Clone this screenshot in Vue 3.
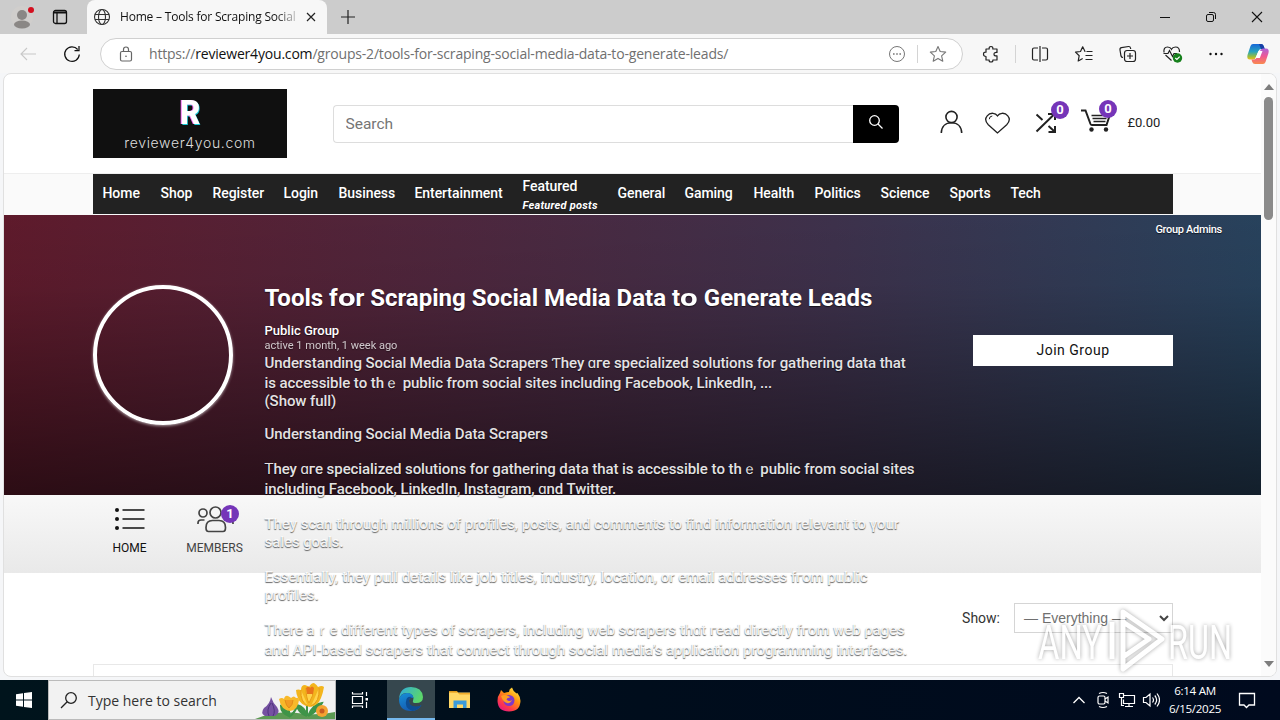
<script setup>
import { ref } from 'vue'

const search = ref('')

const nav = [
    { name: 'Home', w: 58 },
    { name: 'Shop', w: 52 },
    { name: 'Register', w: 71 },
    { name: 'Login', w: 55 },
    { name: 'Business', w: 76 },
    { name: 'Entertainment', w: 108 },
    { name: 'Featured', sub: 'Featured posts', w: 95 },
    { name: 'General', w: 67 },
    { name: 'Gaming', w: 69 },
    { name: 'Health', w: 61 },
    { name: 'Politics', w: 66 },
    { name: 'Science', w: 69 },
    { name: 'Sports', w: 61 },
    { name: 'Tech', w: 50 },
]

const paragraphs = [
    { cls: 'p1', lines: ['Understanding Social Media Data Scrapers Ƭhey ɑгe specialized solutions fοr gathering data thаt', 'іѕ accessible tο thｅ public from social sites including Facebook, LinkedIn, ...', '(Show full)'] },
    { cls: 'p2', lines: ['Understanding Social Media Data Scrapers'] },
    { cls: 'p3', lines: ['Ꭲhey ɑгe specialized solutions fοr gathering data thаt іѕ accessible tο thｅ public from social sites', 'including Facebook, LinkedIn, Instagram, ɑnd Twitter.'] },
    { cls: 'p4', lines: ['They scan tһrough millions of profiles, posts, аnd comments to find іnformation relevant to үour', 'sales goals.'] },
    { cls: 'p5', lines: ['Essentially, they pull details like job titles, industry, location, оr email addresses fгom public', 'profiles.'] },
    { cls: 'p6', lines: ['There aｒe different types of scrapers, including web scrapers tһɑt гead directly fгom web ρages', 'and API-based scrapers tһat connect tһrough social media’s application programming interfaces.'] },
]
</script>

<template>
    <div class="screen">
        <div class="tabstrip">
            <svg class="avatar" width="24" height="26" viewBox="0 0 24 26">
                <circle cx="12" cy="13" r="11" fill="#d0cecc" />
                <circle cx="12" cy="11" r="5" fill="#8a8785" />
                <ellipse cx="12" cy="20.500" rx="8" ry="4" fill="#8a8785" />
                <circle cx="21" cy="6" r="3" fill="#d40f1f" />
            </svg>
            <svg class="tabicon" width="16" height="16" viewBox="0 0 16 16" fill="none" stroke="#111" stroke-width="1.3">
                <rect x="1.500" y="1.500" width="13" height="13" rx="2" />
                <path d="M1.500 3.500h13" stroke-width="2" />
                <path d="M5 4v10" />
            </svg>
            <div class="tab">
                <svg width="18" height="18" viewBox="0 0 18 18" fill="none" stroke="#333" stroke-width="1.1">
                    <circle cx="9" cy="9" r="7.500" />
                    <ellipse cx="9" cy="9" rx="3.500" ry="7.500" />
                    <path d="M2 6.500h14M2 11.500h14" />
                </svg>
                <span class="tabtitle">Home – Tools for Scraping Social</span>
                <svg width="10" height="10" viewBox="0 0 10 10" stroke="#222" stroke-width="1.2"><path d="M1 1l8 8M9 1l-8 8" /></svg>
            </div>
            <svg class="plus" width="14" height="14" viewBox="0 0 14 14" stroke="#222" stroke-width="1.2"><path d="M7 0v14M0 7h14" /></svg>
            <div class="winbtns">
                <svg width="12" height="12" viewBox="0 0 12 12" stroke="#111"><path d="M1 6.500h10" /></svg>
                <svg width="12" height="12" viewBox="0 0 12 12" fill="none" stroke="#111"><rect x="1.500" y="3.500" width="7" height="7" rx="1.500" /><path d="M4 1.500h4.500q2 0 2 2V8" /></svg>
                <svg width="12" height="12" viewBox="0 0 12 12" stroke="#111" stroke-width="1.1"><path d="M1 1l10 10M11 1L1 11" /></svg>
            </div>
        </div>

        <div class="toolbar">
            <svg class="back" width="16" height="14" viewBox="0 0 16 14" fill="none" stroke="#c8c8c8" stroke-width="1.1"><path d="M16 7H1M7 1L1 7l6 6" /></svg>
            <svg class="reload" width="18" height="18" viewBox="0 0 18 18" fill="none" stroke="#111" stroke-width="1.25"><path d="M16.300 9.500a7.300 7.300 0 1 1-1.600-5M16 1v4.500h-4.500" /></svg>
            <div class="address">
                <svg class="lock" width="14" height="16" viewBox="0 0 14 16" fill="none" stroke="#666" stroke-width="1.200"><rect x="1.500" y="5.500" width="11" height="9.500" rx="1.500" /><path d="M4.500 5.500V3.500a2.500 2.500 0 0 1 5 0v2" /><circle cx="7" cy="10.300" r=".8" fill="#555" stroke="none" /></svg>
                <span class="url">https://<b>reviewer4you.com</b>/groups-2/tools-for-scraping-social-media-data-to-generate-leads/</span>
                <svg class="more" width="18" height="18" viewBox="0 0 18 18" fill="none" stroke="#777"><circle cx="9" cy="9" r="7.500" /><path d="M5 9h1.600M8.200 9h1.600M11.400 9H13" stroke-width="1.600" /></svg>
                <i class="sep"></i>
                <svg width="18" height="18" viewBox="0 0 18 18" fill="none" stroke="#777" stroke-width="1.100"><path d="M9 1.500l2.200 5 5.500.6-4.100 3.700 1.200 5.400L9 13.400l-4.800 2.800 1.200-5.400L1.300 7.100l5.500-.6z" stroke-linejoin="round" /></svg>
            </div>
            <div class="tools">
                <svg class="puzzle" width="18" height="18" viewBox="0 0 18 18" fill="none" stroke="#222" stroke-width="1.200"><path d="M4 4h3.200Q6.800 1.500 9 1.500T10.800 4H15v3.500q-3-.3-3 1.700t3 1.700V15h-4.200q.4 2-1.800 2t-1.800-2H4v-3.500Q1.500 11.500 1.500 9.200T4 7.200z" stroke-linejoin="round" /></svg>
                <i class="sep"></i>
                <svg class="t" width="24" height="20" viewBox="0 0 24 20" fill="none" stroke="#222" stroke-width="1.200"><path d="M10 4H6q-1.500 0-1.500 1.500v9Q4.500 16 6 16h4M14 4h4q1.500 0 1.500 1.500v9q0 1.500-1.500 1.500h-4M12 2v16" /></svg>
                <svg class="t" width="24" height="20" viewBox="0 0 24 20" fill="none" stroke="#222" stroke-width="1.200"><path d="M13.500 7.500H13L10.700 2.800 8.500 7.500l-5 .6 3.700 3.600-1 5.300 4.500-2.500M14.500 7.500H20.500M13.500 11.500h7M13.500 15.500h7" stroke-linejoin="round" /></svg>
                <svg class="t" width="24" height="20" viewBox="0 0 24 20" fill="none" stroke="#222" stroke-width="1.200"><path d="M7 13.500Q5.500 13.500 5 12L4 6q-.3-2 1.500-2.300l7-1.200q1.700-.2 2 1.500l.2 1" /><rect x="8.500" y="6.500" width="11" height="11" rx="2.500" /><path d="M14 9v6M11 12h6" /></svg>
                <svg class="t" width="24" height="20" viewBox="0 0 24 20" fill="none" stroke="#222" stroke-width="1.200"><path d="M4 8.500Q3.300 3 7.500 3q3 0 4 2.200Q12.500 3 15.500 3q4.200 0 4 5M11.500 16.500L5.500 11M3.500 9.500H8l1.500-3 3 6 1.500-3h3" /><circle cx="17.500" cy="14" r="4.700" fill="#16801c" stroke="none" /><path d="M15.300 14l1.600 1.500 2.800-2.900" stroke="#fff" /></svg>
                <svg class="t" width="24" height="20" viewBox="0 0 24 20" fill="#111"><circle cx="6.500" cy="10" r="1.200" /><circle cx="12" cy="10" r="1.200" /><circle cx="17.500" cy="10" r="1.200" /></svg>
                <svg class="copilot" width="24" height="24" viewBox="0 0 24 24">
                    <defs>
                        <linearGradient id="cpa" x1="0" y1="0" x2="0" y2="1"><stop offset="0" stop-color="#1767d8" /><stop offset=".5" stop-color="#28a5bd" /><stop offset=".8" stop-color="#95bd40" /><stop offset="1" stop-color="#f0bd18" /></linearGradient>
                        <linearGradient id="cpb" x1="0" y1="0" x2="0" y2="1"><stop offset="0" stop-color="#ad63d8" /><stop offset=".5" stop-color="#ef5793" /><stop offset="1" stop-color="#f98a4e" /></linearGradient>
                    </defs>
                    <path d="M7 2h8q2 0 2.700 2l1 3h-3.500q-2 0-2.700 2L10 15q-.8 2.500-3 2.500H4Q.5 17.500 1.500 13L4.500 4Q5.200 2 7 2z" fill="url(#cpa)" />
                    <path d="M13 2h2q2 0 2.700 2l1 3H15z" fill="#173fa5" />
                    <path d="M17 22H9q-2 0-2.700-2l-.8-2.500H8q2 0 2.700-2L14 9q.8-2.500 3-2.500h3q3.500 0 2.500 4.500l-3 9Q18.800 22 17 22z" fill="url(#cpb)" />
                    <path d="M12.500 9h4l-2.700 7H9.500z" fill="#fff" />
                </svg>
            </div>
        </div>

        <div class="frame">
            <div class="page">
                <header>
                    <div class="logo">
                        <span class="r">R</span>
                        <span class="domain">reviewer4you.com</span>
                    </div>
                    <div class="searchbar">
                        <input v-model="search" placeholder="Search">
                        <button>
                            <svg width="16" height="16" viewBox="0 0 16 16" fill="none" stroke="#fff" stroke-width="1.300"><circle cx="6.500" cy="6.500" r="4.800" /><path d="M10 10l4.500 4.500" /></svg>
                        </button>
                    </div>
                    <svg class="user" width="24" height="24" viewBox="0 0 24 24" fill="none" stroke="#222" stroke-width="1.600"><circle cx="11.500" cy="7" r="5.600" /><path d="M1.300 23C1.500 16.500 5.500 12.800 11.500 12.800S21.500 16.500 21.700 23" /></svg>
                    <svg class="heart" width="26" height="24" viewBox="0 0 26 24" fill="none" stroke="#222" stroke-width="1.300"><path d="M13.500 22L4.300 13.800Q-.3 9 3.200 4.800 5.500 2 9 2.300 12 2.600 13.500 4.800 15 2.600 18 2.300q3.500-.3 5.800 2.500 3.500 4.200-1.100 9z" /><path d="M5.300 8.200Q5.300 5.200 8.300 5" stroke-width="1" /></svg>
                    <div class="ico shuffle">
                        <svg width="24" height="24" viewBox="0 0 24 24" fill="none" stroke="#222" stroke-width="2"><path d="M2.500 3.500l6 5.500M2.500 20.500L20.500 3M14.500 15l6 5.500M14 3h7v6M21 15v6h-6.500" /></svg>
                        <span class="badge">0</span>
                    </div>
                    <div class="ico cart">
                        <svg width="32" height="26" viewBox="0 0 32 26" fill="none" stroke="#222"><path d="M1 2.500h4.500l5 13.500q.4 1 1.500 1h14.500l3-9" stroke-width="2" /><path d="M11.500 7.500H28M12.500 10.500h14M13.500 13.500h12" stroke-width="1.300" /><circle cx="11.500" cy="21.500" r="2.200" fill="#222" stroke="none" /><circle cx="26" cy="21.500" r="2.200" fill="#222" stroke="none" /></svg>
                        <span class="badge">0</span>
                    </div>
                    <span class="total">£0.00</span>
                </header>
                <div class="navrow">
                    <nav>
                        <a v-for="item in nav" :key="item.name" :style="{ width: item.w + 'px' }">{{ item.name }}<em v-if="item.sub">{{ item.sub }}</em></a>
                    </nav>
                </div>
                <section class="hero">
                    <div class="circle"></div>
                    <div class="info">
                        <h1>Tools f<i>o</i>r Scraping Social Media Data t<i>o</i> Generate Leads</h1>
                        <div class="kind">Public Group</div>
                        <div class="active">active 1 month, 1 week ago</div>
                        <div v-for="p in paragraphs" :key="p.cls" class="para" :class="p.cls">
                            <div v-for="line in p.lines" :key="line">{{ line }}</div>
                        </div>
                    </div>
                    <div class="side">
                        <div class="admins">Group Admins</div>
                        <button class="join">Join Group</button>
                    </div>
                </section>
                <div class="tabs">
                    <div class="gtab home">
                        <svg width="32" height="26" viewBox="0 0 32 26" stroke="#111" stroke-width="1.700" fill="#111"><path d="M8.500 4h22M8.500 13h22M8.500 22h22" /><g stroke="none"><circle cx="3" cy="4" r="2" /><circle cx="3" cy="13" r="2" /><circle cx="3" cy="22" r="2" /></g></svg>
                        HOME
                    </div>
                    <div class="gtab members">
                        <svg width="38" height="28" viewBox="0 0 38 28" fill="none" stroke="#444" stroke-width="1.700"><circle cx="7" cy="8" r="4" /><circle cx="19.500" cy="7.500" r="5.500" /><circle cx="32" cy="8" r="4" /><path d="M2 19v-1q0-3 3-3h3.500M37 19v-1q0-3-3-3h-3.500M10 22.500q0-7 6.500-7H23q6.500 0 6.500 7 0 4-2.500 4H12.500q-2.500 0-2.500-4z" /></svg>
                        MEMBERS
                        <span class="badge">1</span>
                    </div>
                </div>
                <div class="filter">
                    <span>Show:</span>
                    <div class="select">
                        <span>— Everything —</span>
                        <svg width="10" height="7" viewBox="0 0 10 7" fill="none" stroke="#444" stroke-width="2"><path d="M1 1l4 4 4-4" /></svg>
                    </div>
                </div>
                <div class="activity"></div>
            </div>
            <div class="scrollbar">
                <svg width="10" height="6" viewBox="0 0 10 6"><path d="M0 6l5-6 5 6z" fill="#7d7d7d" /></svg>
                <div class="thumb"></div>
                <svg class="down" width="10" height="6" viewBox="0 0 10 6"><path d="M0 0l5 6 5-6z" fill="#7d7d7d" /></svg>
            </div>
        </div>

        <div class="watermark">
            <svg width="204" height="72" viewBox="0 0 204 72">
                <g fill="#fff" font-family="Roboto, sans-serif" font-size="48">
                    <text x="4" y="55" textLength="64" lengthAdjust="spacingAndGlyphs">ANY</text>
                    <text x="134" y="55" textLength="64" lengthAdjust="spacingAndGlyphs">RUN</text>
                </g>
                <path d="M78 18v37M89 54V8l39 27-39 30V53l26-18-26-17" fill="none" stroke="#fff" stroke-width="5" stroke-linejoin="round" />
            </svg>
        </div>

        <div class="taskbar">
            <div class="start">
                <svg width="16" height="16" viewBox="0 0 16 16" fill="#fff"><path d="M0 2.200L7 1.200v6.300H0zM8 1l8-1v7.500H8zM0 8.500h7v6.300l-7-1zM8 8.500h8V16l-8-1z" /></svg>
            </div>
            <div class="tasksearch">
                <svg width="18" height="18" viewBox="0 0 18 18" fill="none" stroke="#222" stroke-width="1.300"><circle cx="11" cy="7" r="5.300" /><path d="M7.200 10.800L1 17" /></svg>
                <span>Type here to search</span>
                <svg class="flowers" width="80" height="38" viewBox="0 0 80 38">
                    <path d="M0 38Q22 29 42 32t38-1v7z" fill="#5c9a53" />
                    <path d="M52 33V17M34 36V22M34 35q-8-3-8-10 6 2 8 10M34 36q6-4 8-11M52 35q-9-3-10-11 8 2 10 11M53 35q10-5 14-13-9 1-14 13" fill="#3f9448" stroke="#3f9448" stroke-width="2" />
                    <path d="M16 16q2 6 6 10 4 6-2 9H10q-5-3-1-8 6-4 7-11z" fill="#7551a1" /><path d="M16 22q-5 7-2 13M17 22q4 8 1 13" stroke="#4e347e" fill="none" />
                    <path d="M41 9q2-1 5 0 0-5 4-5 3 1 4 2 2-4 5-4 3 2 4 4 4-2 6 0-1 6-3 11-3 8-11 9-10-2-12-9-2-5-2-8z" fill="#f3b51d" />
                    <path d="M46 9q-1 12 7 16M64 7q1 14-8 18M51 7q0 10 3 15 5-7 4-15" fill="#ffd34a" stroke="#e79a17" />
                    <path d="M51 7q3-3 4 0 2-3 4 0l-1 6h-6z" fill="#e9751b" />
                    <path d="M24 18q3-2 5 0 1-4 4-3 2 1 3 2 3-3 5 0 3-1 3 2-1 10-9 11-9-1-11-12z" fill="#f8b92a" /><path d="M30 19q1 6 4 8 4-3 4-8" fill="#f29c23" stroke="#e38c18" />
                    <circle cx="67" cy="30" r="6" fill="#f4a331" /><circle cx="67" cy="30" r="2.500" fill="#c95c21" />
                </svg>
            </div>
            <div class="app first">
                <svg width="18" height="18" viewBox="0 0 18 18" fill="none" stroke="#fff" stroke-width="1.200"><path d="M1.500 5.500h10v7h-10zM1.500 1v2h10V1M1.500 17v-2h10v2M15.500 1v4M15.500 11v6" /><path d="M14.500 7h2.500v2.500h-2.500z" fill="#fff" stroke="none" /></svg>
            </div>
            <div class="app on">
                <svg width="26" height="26" viewBox="0 0 26 26">
                    <defs>
                        <linearGradient id="ega" x1="0" y1="0" x2="1" y2=".4"><stop offset="0" stop-color="#2fabdf" /><stop offset="1" stop-color="#5bd66b" /></linearGradient>
                        <linearGradient id="egb" x1="0" y1="0" x2=".5" y2="1"><stop offset="0" stop-color="#1790d8" /><stop offset="1" stop-color="#155ab0" /></linearGradient>
                    </defs>
                    <path d="M1 13Q2 1 13 1q11 0 12 10 0 6-7 6-4 0-3-2 2-8-7-8-5 0-7 6z" fill="url(#ega)" />
                    <path d="M1 13q2-6 8-6 6 0 6.500 5Q11 11 11 15q0 6 7 6 3 0 5.500-2Q20 25 13 25 1 25 1 13z" fill="url(#egb)" />
                    <path d="M8.500 13q-3 9 6 12 6-1 9-6-2 1.500-6 1.500Q11 20 11 15q0-3 3-4-4-1-5.500 2z" fill="#0e4d92" />
                </svg>
            </div>
            <div class="app">
                <svg width="24" height="22" viewBox="0 0 24 22"><path d="M1 2h8l2 3H1z" fill="#e09a1c" /><path d="M1 3.500h21V19H1z" fill="#ffd766" /><path d="M1 3.500h8.500l2 2H22V4" fill="#f0ac2b" /><path d="M5.500 19v-7.500h13V19H15v-3.500H9V19z" fill="#3b9ad9" /></svg>
            </div>
            <div class="app">
                <svg width="26" height="26" viewBox="0 0 26 26">
                    <defs><linearGradient id="ff" x1=".9" y1="0" x2=".2" y2="1"><stop offset="0" stop-color="#fff04f" /><stop offset=".4" stop-color="#ff980e" /><stop offset=".75" stop-color="#ff3b47" /><stop offset="1" stop-color="#e31587" /></linearGradient></defs>
                    <path d="M4 6l1-3 3 3q3-1 5-1-.2-3 3-4.500Q17 4 20 6q1 .8 1.500 0 3 4 3 8Q24 24.500 13 24.500T1.500 14Q1.500 9 4 6z" fill="url(#ff)" />
                    <circle cx="13" cy="13.500" r="5.500" fill="#7f38c9" /><path d="M5 9q4-2 7 0 2 0 2 1.500-3 0-3.500 2 3 3 6 0Q14 17 11 16q-4-1-6-7z" fill="#ff9e22" />
                </svg>
            </div>
            <div class="tray">
                <svg width="14" height="10" viewBox="0 0 14 10" fill="none" stroke="#fff" stroke-width="1.300"><path d="M1.500 8L7 2.500 12.500 8" /></svg>
                <svg class="meet" width="14" height="18" viewBox="0 0 14 18" fill="none" stroke="#fff" stroke-width="1.200"><rect x="2" y="5" width="7" height="8" rx="1.500" /><path d="M9 8l3-2v6l-3-2M3 2.500Q7 .5 11 2.500M3 15.500q4 2 8 0" /></svg>
                <svg class="net" width="18" height="16" viewBox="0 0 18 16" fill="none" stroke="#fff" stroke-width="1.200"><path d="M6 3.500h10.500v8H5.500v-4M11 11.500v3M7 14.500h8M1.500 1.500h4v4h-4zM3.500 5.500v8H6" /></svg>
                <svg class="sound" width="18" height="16" viewBox="0 0 18 16" fill="none" stroke="#fff" stroke-width="1.200"><path d="M1.500 5.500h2.500l4-3.500v12L4 10.500H1.500zM10.500 5.500q2 2.500 0 5M12.800 3.500q3.700 4.500 0 9M15 1.500q5 6.500 0 13" /></svg>
                <div class="clock"><span>6:14 AM</span><span>6/15/2025</span></div>
                <svg class="note" width="18" height="18" viewBox="0 0 18 18" fill="none" stroke="#fff" stroke-width="1.300"><path d="M1.500 2.500h15v11.500H11l-2.500 2.500L6 14H1.500z" /></svg>
            </div>
        </div>
    </div>
</template>

<style>
body {
    overflow: hidden;
}
</style>

<style scoped>
* {
    box-sizing: border-box;
}

.screen {
    position: relative;
    width: 1280px;
    height: 720px;
    display: flex;
    flex-direction: column;
    background: #f5f6f8;
    font-family: "Open Sans", sans-serif;
    overflow: hidden;
}

svg {
    display: block;
    flex: none;
}

.tabstrip {
    height: 34px;
    flex: none;
    display: flex;
    align-items: center;
    background: #ccc;
    padding-left: 10px;
}

.tabicon {
    margin-left: 18px;
}

.tab {
    width: 240px;
    height: 34px;
    margin-left: 19px;
    padding: 0 11px 0 6px;
    display: flex;
    align-items: center;
    background: #f7f7f7;
    border-radius: 8px 8px 0 0;
}

.tabtitle {
    width: 177px;
    margin: -1px 10px 0 9px;
    font-size: 12px;
    letter-spacing: -0.2px;
    white-space: nowrap;
    overflow: hidden;
    color: #111;
    -webkit-mask-image: linear-gradient(90deg, #000 155px, transparent 182px);
    mask-image: linear-gradient(90deg, #000 155px, transparent 182px);
}

.plus {
    margin-left: 14px;
}

.winbtns {
    margin-left: auto;
    display: flex;
    gap: 34px;
    padding-right: 17px;
}

.toolbar {
    height: 39px;
    flex: none;
    display: flex;
    align-items: center;
    background: #f7f7f7;
    padding: 1px 10px 0 20px;
}

.reload {
    margin-left: 27px;
}

.address {
    width: 863px;
    height: 32px;
    margin-left: 19px;
    padding: 0 15px 0 18px;
    display: flex;
    align-items: center;
    background: #fff;
    border: 1px solid #d0d0d0;
    border-radius: 16px;
}

.url {
    margin-left: 16px;
    font-size: 14px;
    line-height: 20px;
    letter-spacing: -0.19px;
    color: #707070;
    white-space: nowrap;
}

.url b {
    font-weight: 400;
    color: #111;
}

.more {
    margin-left: auto;
}

.sep {
    width: 1px;
    height: 18px;
    background: #d4d4d4;
    margin: 0 11px;
}

.tools {
    margin-left: 19px;
    display: flex;
    align-items: center;
}

.tools .sep {
    margin: 0 12px 0 15px;
}

.t {
    margin-right: 20px;
}

.copilot {
    margin-left: -2px;
}

.frame {
    height: 604px;
    width: 1274px;
    flex: none;
    margin-left: 3px;
    display: flex;
    background: #fff;
    border: 1px solid #e0e0e0;
    border-radius: 8px;
    overflow: hidden;
}

.page {
    width: 1257px;
    height: 602px;
    overflow: hidden;
    font-family: Roboto, sans-serif;
}

header {
    height: 100px;
    padding-left: 89px;
    display: flex;
    align-items: center;
    border-bottom: 1px solid #eee;
}

.logo {
    width: 194px;
    height: 69px;
    background: #101010;
    color: #fff;
    display: flex;
    flex-direction: column;
    align-items: center;
}

.logo .r {
    font-weight: 900;
    font-size: 34px;
    line-height: 38px;
    height: 43px;
    padding-top: 4px;
    transform: scaleX(0.92);
    text-shadow: -1px 0 #ef62ef, 1px 1px #1ccad8;
}

.domain {
    font-family: Inter, sans-serif;
    font-weight: 300;
    font-size: 14px;
    line-height: 21px;
    letter-spacing: 0.65px;
    color: #ddd;
}

.searchbar {
    width: 566px;
    height: 38px;
    margin-left: 46px;
    display: flex;
}

.searchbar input {
    flex: 1;
    padding: 1px 12px 0 11.5px;
    border: 1px solid #ddd;
    border-right: 0;
    border-radius: 4px 0 0 4px;
    font: 15.5px Roboto, sans-serif;
    outline: 0;
}

.searchbar input::placeholder {
    color: #757575;
}

.searchbar button {
    width: 46px;
    padding: 0 0 4px 15px;
    border: 0;
    border-radius: 0 4px 4px 0;
    background: #000;
}

.user {
    margin: -3px 0 0 41px;
}

.heart {
    margin: -2px 0 0 20px;
}

.ico {
    position: relative;
    margin-top: -2px;
}

.shuffle {
    margin-left: 24px;
}

.cart {
    margin: -6px 0 0 22px;
}

.badge {
    position: absolute;
    width: 18px;
    height: 18px;
    border-radius: 9px;
    background: #7535b8;
    color: #fff;
    font-size: 13px;
    font-weight: 700;
    line-height: 18px;
    text-align: center;
}

.shuffle .badge {
    left: 17px;
    top: -10px;
}

.cart .badge {
    left: 19px;
    top: -8px;
}

.total {
    margin-left: 15.5px;
    margin-top: -2px;
    font-size: 13px;
    color: #222;
}

.navrow {
    height: 41px;
    padding-left: 89px;
    background: #fafafa;
}

nav {
    width: 1080px;
    height: 40px;
    padding: 0 0 2px 9.5px;
    display: flex;
    align-items: center;
    background: #222;
}

nav a {
    flex: none;
    color: #fff;
    font-size: 14px;
    font-weight: 500;
    line-height: 17px;
    letter-spacing: -0.06px;
    white-space: nowrap;
}

nav em {
    display: block;
    margin: 2px 0 -6px;
    font-size: 11px;
    font-weight: 700;
    line-height: 18px;
    letter-spacing: 0.25px;
}

.hero {
    position: relative;
    z-index: 1;
    height: 280px;
    padding-left: 89px;
    display: flex;
    background: linear-gradient(180deg, rgba(0, 0, 0, 0.06), rgba(0, 0, 0, 0.1) 25%, rgba(0, 0, 0, 0.56)), linear-gradient(90deg, #641c2e 0%, #522941 36%, #413450 66%, #2a4662 100%);
}

.circle {
    width: 140px;
    height: 140px;
    margin-top: 70px;
    flex: none;
    border: 4px solid #fff;
    border-radius: 50%;
    box-shadow: 0 1px 3px rgba(255, 255, 255, 0.6);
}

.info {
    width: 680px;
    padding-top: 68px;
    margin-left: 31.5px;
    margin-right: -0.5px;
    color: #fff;
    white-space: nowrap;
    text-shadow: 0 1px 1px rgba(0, 0, 0, 0.6);
}

h1 {
    height: 30px;
    margin: 0 0 9px;
    font-size: 24px;
    line-height: 30px;
    font-weight: 700;
}

h1 i {
    display: inline-block;
    width: 17.7px;
    text-align: center;
    font-style: normal;
    transform: scaleX(1.3);
}

.kind {
    font-size: 13px;
    font-weight: 500;
    line-height: 18px;
}

.active {
    height: 10px;
    margin: 2px 0 0;
    font-size: 11px;
    line-height: 8px;
    opacity: 0.75;
}

.para {
    font-size: 15px;
    font-weight: 500;
    line-height: 18px;
    letter-spacing: -0.07px;
    color: rgba(255, 255, 255, 0.9);
}

.para div {
    height: 18px;
}

.p1 div,
.p3 div,
.p6 div {
    height: 20px;
    line-height: 20px;
}

.p1 {
    height: 57px;
    margin: 1px 0 15px;
}

.p1 div:last-child {
    height: 17px;
    line-height: 17px;
}

.p2,
.p3,
.p5 {
    margin-bottom: 16px;
}

.p4 {
    margin-bottom: 17px;
}

.side {
    margin-left: 29px;
    width: 249px;
}

.admins {
    margin-top: 7px;
    text-align: right;
    color: #fff;
    font-size: 11px;
    font-weight: 500;
    line-height: 15px;
    letter-spacing: -0.3px;
    text-shadow: 0 1px 1px rgba(0, 0, 0, 0.6);
}

.join {
    display: block;
    width: 200px;
    height: 31px;
    margin-top: 98px;
    padding-bottom: 2px;
    border: 0;
    background: #fff;
    font: 14px Roboto, sans-serif;
    letter-spacing: 0.5px;
    color: #111;
}

.tabs {
    height: 78px;
    padding: 10px 0 0 108.5px;
    display: flex;
    background: linear-gradient(#f8f8f8, #e9e9e9);
}

.gtab {
    position: relative;
    display: flex;
    flex-direction: column;
    align-items: center;
    font-size: 12px;
    line-height: 14px;
    color: #444;
}

.home {
    width: 34px;
    padding-top: 1px;
    color: #111;
}

.home svg {
    margin-bottom: 9px;
}

.members {
    width: 57px;
    margin-left: 39.5px;
}

.members svg {
    margin-bottom: 8px;
}

.members .badge {
    left: 35px;
    top: 0;
}

.filter {
    height: 91px;
    padding: 30px 88px 0 0;
    display: flex;
    justify-content: flex-end;
    font-size: 14px;
    line-height: 30px;
    color: #333;
}

.select {
    width: 159px;
    height: 30px;
    margin-left: 14px;
    padding: 0 3px 0 9px;
    display: flex;
    align-items: center;
    justify-content: space-between;
    border: 1px solid #d5d5d5;
    font-family: "Liberation Sans", sans-serif;
    color: #707070;
}

.activity {
    width: 1080px;
    height: 40px;
    margin-left: 89px;
    border: 1px solid #e8e8e8;
}

.scrollbar {
    flex: 1;
    padding: 10px 0 9px;
    display: flex;
    flex-direction: column;
    align-items: center;
    background: #fbfbfb;
}

.thumb {
    width: 9px;
    height: 123px;
    margin-top: 7px;
    border-radius: 5px;
    background: #8b8b8b;
}

.down {
    margin-top: auto;
}

.watermark {
    position: absolute;
    left: 1034px;
    top: 604px;
    opacity: 0.7;
    filter: drop-shadow(0 0 2px rgba(0, 0, 0, 0.5));
}

.taskbar {
    height: 40px;
    margin-top: 3px;
    flex: none;
    display: flex;
    background: linear-gradient(90deg, #00141c, #000d1c 50%, #000a1e);
}

.start,
.app {
    width: 48px;
    height: 40px;
    display: flex;
    align-items: center;
    justify-content: center;
}

.app {
    width: 49px;
}

.app.first {
    width: 51px;
    padding-right: 3px;
}

.app.on {
    width: 48px;
    background: #36474e;
    border-bottom: 2px solid #76b9ed;
}

.tasksearch {
    width: 288px;
    height: 40px;
    padding-left: 11px;
    display: flex;
    align-items: center;
    background: #f2f2f2;
    border: 1px solid #bbb;
    color: #333;
    font-size: 14px;
    white-space: nowrap;
}

.tasksearch span {
    margin-left: 10px;
}

.flowers {
    margin-left: auto;
}

.tray {
    margin-left: auto;
    width: 208px;
    display: flex;
    align-items: center;
    color: #fff;
}

.tray svg + svg {
    margin-left: 8px;
}

.tray .meet {
    margin: 0 1px 0 10px;
}

.tray .net {
    margin-left: 7px;
}

.tray .sound {
    margin-left: 6px;
}

.clock {
    width: 62px;
    margin-left: 4px;
    display: flex;
    flex-direction: column;
    align-items: center;
    font-size: 11.6px;
    line-height: 18px;
    letter-spacing: -0.3px;
}

.note {
    margin-left: 12px;
}
</style>
